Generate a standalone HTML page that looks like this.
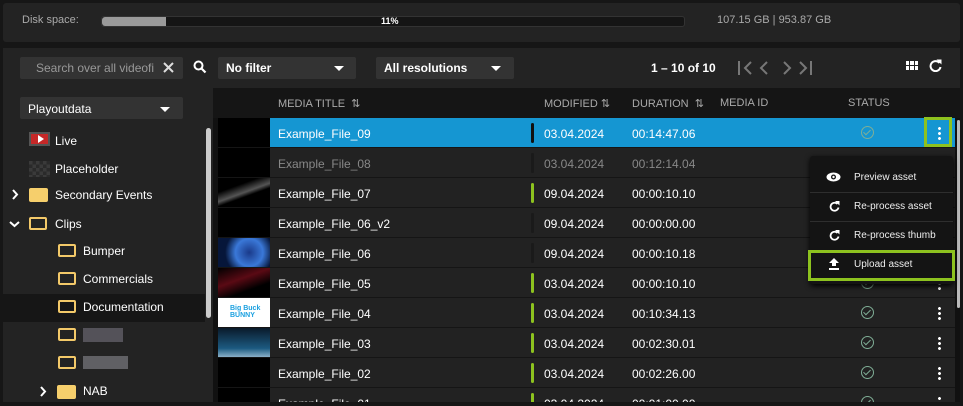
<!DOCTYPE html>
<html style="width:963px;height:406px;overflow:hidden"><head><style>
*{margin:0;padding:0;box-sizing:border-box}
body{width:963px;height:406px;background:#161616;font-family:"Liberation Sans",Arial,sans-serif;color:#fff;position:relative;overflow:hidden;font-size:12px}
.a{position:absolute}
.top{left:3px;top:3px;width:957px;height:39px;background:#232323;border-radius:3px}
.main{left:3px;top:48px;width:957px;height:358px;background:#232323}
.bar{left:101px;top:16px;width:584px;height:11px;background:#151515;border:1px solid #333;border-radius:3px}
.inp{background:#333;border-radius:2px}
.row{left:218px;width:737px;height:30px;border-bottom:1px solid #151515;background:#222}
.row .t{position:absolute;left:60px;top:9px;font-size:12px}
.row .d{position:absolute;left:326px;top:9px}
.row .u{position:absolute;left:414px;top:9px}
.row .th{position:absolute;left:0;top:0;width:52px;height:29px;background:#000}
.row .g{position:absolute;left:313px;top:5px;width:3px;height:20px;border-radius:2px;background:#1a1a1a}
.gr{background:#8dc21f!important}
.ok{position:absolute;left:643px;top:8px;width:13px;height:13px;border:1.5px solid #7fae96;border-radius:50%}
.ok:after{content:"";position:absolute;left:3px;top:1px;width:3px;height:6px;border:solid #7fae96;border-width:0 1.5px 1.5px 0;transform:rotate(45deg)}
.kb{position:absolute;left:720px;top:8px;width:3px;height:15px;background:radial-gradient(circle,#fff 1.3px,transparent 1.6px) 0 0/3px 5px}
.tr{position:absolute;font-size:12px;color:#fff}
.fo{position:absolute;width:18px;height:13px;border:2px solid #f3c969;border-radius:2px}
.ff{position:absolute;width:19px;height:14px;background:#f6cf6c;border-radius:2px}
.mi{position:absolute;left:854px;font-size:10px;color:#eee}
.hd{position:absolute;top:97px;font-size:11px;color:#aaa}
.ch{position:absolute}
</style></head><body>
<div class="a top"></div>
<div class="a" style="left:22px;top:14px;color:#aaa;font-size:11px">Disk space:</div>
<div class="a bar"><div style="width:64px;height:9px;background:#9a9a9a;border-radius:3px 0 0 3px"></div></div>
<div class="a" style="left:381px;top:16px;font-size:9px;font-weight:bold">11%</div>
<div class="a" style="left:717px;top:14px;color:#aaa;font-size:11px">107.15 GB | 953.87 GB</div>

<div class="a main"></div>
<div class="a inp" style="left:20px;top:57px;width:163px;height:22px"></div>
<div class="a" style="left:36px;top:61px;color:#999;font-size:12px">Search over all videofi</div>
<svg class="a" style="left:163px;top:62px" width="11" height="11"><path d="M1 1L10 10M10 1L1 10" stroke="#ddd" stroke-width="2"/></svg>
<svg class="a" style="left:193px;top:60px" width="14" height="14"><circle cx="5.5" cy="5.5" r="4" stroke="#fff" stroke-width="2" fill="none"/><line x1="8.5" y1="8.5" x2="12.5" y2="12.5" stroke="#fff" stroke-width="2.2"/></svg>
<div class="a inp" style="left:218px;top:57px;width:138px;height:22px"></div>
<div class="a" style="left:226px;top:61px;font-weight:bold;font-size:12px">No filter</div>
<div class="a" style="left:334px;top:66px;border:5px solid transparent;border-top:5px solid #fff"></div>
<div class="a inp" style="left:376px;top:57px;width:138px;height:22px"></div>
<div class="a" style="left:384px;top:61px;font-weight:bold;font-size:12px">All resolutions</div>
<div class="a" style="left:491px;top:66px;border:5px solid transparent;border-top:5px solid #fff"></div>
<div class="a" style="left:651px;top:61px;font-weight:bold;font-size:12px">1 – 10 of 10</div>
<svg class="a" style="left:737px;top:59px" width="76" height="18" fill="none" stroke="#777" stroke-width="2"><path d="M2 2V16M14 3L8 9L14 15M30 3L24 9L30 15M47 3L53 9L47 15M63 3L69 9L63 15M74 2V16"/></svg>
<svg class="a" style="left:906px;top:61px" width="12" height="9"><g fill="#fff"><rect x="0" y="0" width="3" height="4"/><rect x="4" y="0" width="4" height="4"/><rect x="9" y="0" width="3" height="4"/><rect x="0" y="5" width="3" height="4"/><rect x="4" y="5" width="4" height="4"/><rect x="9" y="5" width="3" height="4"/></g></svg>
<svg class="a" style="left:929px;top:59px" width="13" height="13"><path d="M10.5 4A5 5 0 1 0 11.5 8" stroke="#fff" stroke-width="2" fill="none"/><path d="M7.5 0.5L12.5 0.5L12.5 5.5Z" fill="#fff"/></svg>

<div class="a inp" style="left:20px;top:97px;width:163px;height:22px"></div>
<div class="a" style="left:28px;top:102px;font-size:12px">Playoutdata</div>
<div class="a" style="left:160px;top:107px;border:5px solid transparent;border-top:5px solid #fff"></div>

<div class="a" style="left:3px;top:294px;width:202px;height:28px;background:#161616"></div>
<div class="a" style="left:206px;top:128px;width:5px;height:190px;background:#ccc;border-radius:3px"></div>
<div class="a" style="left:29px;top:132px;width:21px;height:14px;background:#c62828;border:2px solid #555"></div>
<div class="a" style="left:38px;top:135px;border:4px solid transparent;border-left:6px solid #fff;border-right:0"></div>
<div class="tr" style="left:55px;top:134px">Live</div>
<div class="a" style="left:29px;top:161px;width:21px;height:16px;background:repeating-conic-gradient(#2a2a2a 0 25%,#3a3a3a 0 50%) 0 0/7px 7px"></div>
<div class="tr" style="left:55px;top:162px">Placeholder</div>
<svg class="ch" style="left:11px;top:189px" width="8" height="11"><path d="M2 1L6 5.5L2 10" stroke="#fff" stroke-width="2" fill="none"/></svg>
<div class="ff" style="left:29px;top:188px"></div>
<div class="tr" style="left:55px;top:188px">Secondary Events</div>
<svg class="ch" style="left:9px;top:220px" width="11" height="8"><path d="M1 2L5.5 6L10 2" stroke="#fff" stroke-width="2" fill="none"/></svg>
<div class="fo" style="left:29px;top:217px"></div>
<div class="tr" style="left:55px;top:217px">Clips</div>
<div class="fo" style="left:58px;top:244px"></div><div class="tr" style="left:83px;top:244px">Bumper</div>
<div class="fo" style="left:58px;top:272px"></div><div class="tr" style="left:83px;top:272px">Commercials</div>
<div class="fo" style="left:58px;top:300px"></div><div class="tr" style="left:83px;top:300px">Documentation</div>
<div class="fo" style="left:58px;top:328px"></div><div class="a" style="left:83px;top:328px;width:40px;height:14px;background:#6a6670;opacity:.7"></div>
<div class="fo" style="left:58px;top:356px"></div><div class="a" style="left:83px;top:356px;width:45px;height:13px;background:#7a7a80;opacity:.7"></div>
<svg class="ch" style="left:39px;top:386px" width="8" height="11"><path d="M2 1L6 5.5L2 10" stroke="#fff" stroke-width="2" fill="none"/></svg>
<div class="ff" style="left:57px;top:385px"></div><div class="tr" style="left:83px;top:384px">NAB</div>

<div class="a" style="left:213px;top:88px;width:747px;height:318px;background:#111"></div>
<div class="a" style="left:213px;top:88px;width:747px;height:30px;background:#151515"></div>
<div class="hd" style="left:278px">MEDIA TITLE &nbsp;⇅</div>
<div class="hd" style="left:544px">MODIFIED ⇅</div>
<div class="hd" style="left:632px">DURATION &nbsp;⇅</div>
<div class="hd" style="left:720px">MEDIA ID</div>
<div class="hd" style="left:848px">STATUS</div>

<div class="a row" style="top:118px;background:#1596d2"><div class="th"></div><div class="t">Example_File_09</div><div class="g" style="background:#111"></div><div class="d">03.04.2024</div><div class="u">00:14:47.06</div><div class="ok"></div><div class="kb"></div></div>
<div class="a row" style="top:148px;color:#888"><div class="th"></div><div class="t">Example_File_08</div><div class="g"></div><div class="d">03.04.2024</div><div class="u">00:12:14.04</div></div>
<div class="a row" style="top:178px"><div class="th" style="background:linear-gradient(160deg,#000 30%,#555 50%,#000 60%)"></div><div class="t">Example_File_07</div><div class="g gr"></div><div class="d">09.04.2024</div><div class="u">00:00:10.10</div></div>
<div class="a row" style="top:208px"><div class="th"></div><div class="t">Example_File_06_v2</div><div class="g"></div><div class="d">09.04.2024</div><div class="u">00:00:00.00</div></div>
<div class="a row" style="top:238px"><div class="th" style="background:radial-gradient(circle at 60% 50%,#1a3a8a,#3a78d8 40%,#06163a 70%)"></div><div class="t">Example_File_06</div><div class="g"></div><div class="d">09.04.2024</div><div class="u">00:00:10.18</div></div>
<div class="a row" style="top:268px"><div class="th" style="background:linear-gradient(160deg,#000,#5a0a14 40%,#000 70%)"></div><div class="t">Example_File_05</div><div class="g gr"></div><div class="d">03.04.2024</div><div class="u">00:00:10.10</div><div class="ok"></div><div class="kb"></div></div>
<div class="a row" style="top:298px"><div class="th" style="background:#fff"><div style="position:absolute;left:12px;top:7px;font-size:7px;color:#1aa0e0;font-weight:bold;line-height:7px">Big Buck<br>BUNNY</div></div><div class="t">Example_File_04</div><div class="g gr"></div><div class="d">03.04.2024</div><div class="u">00:10:34.13</div><div class="ok"></div><div class="kb"></div></div>
<div class="a row" style="top:328px"><div class="th" style="background:linear-gradient(180deg,#0a1a2a,#1c5a80 70%,#8ab0c8)"></div><div class="t">Example_File_03</div><div class="g gr"></div><div class="d">03.04.2024</div><div class="u">00:02:30.01</div><div class="ok"></div><div class="kb"></div></div>
<div class="a row" style="top:358px"><div class="th"></div><div class="t">Example_File_02</div><div class="g gr"></div><div class="d">03.04.2024</div><div class="u">00:02:26.00</div><div class="ok"></div><div class="kb"></div></div>
<div class="a row" style="top:388px;height:18px;overflow:hidden"><div class="th"></div><div class="t">Example_File_01</div><div class="g gr"></div><div class="d">03.04.2024</div><div class="u">00:01:00.00</div><div class="ok"></div><div class="kb"></div></div>
<div class="a" style="left:0;top:402px;width:963px;height:4px;background:#161616"></div>
<div class="a" style="left:957px;top:120px;width:3px;height:188px;background:#bbb;border-radius:2px"></div>

<div class="a" style="left:924px;top:117px;width:28px;height:30px;border:3px solid #8dc21f"></div>

<div class="a" style="left:810px;top:156px;width:143px;height:128px;background:#141414;border-radius:3px;box-shadow:0 2px 6px #000"></div>
<div class="a" style="left:810px;top:192px;width:143px;height:1px;background:#2e2e2e"></div>
<div class="a" style="left:810px;top:221px;width:143px;height:1px;background:#2e2e2e"></div>
<svg class="a" style="left:826px;top:172px" width="15" height="10"><ellipse cx="7.5" cy="5" rx="7" ry="4.5" fill="#fff"/><circle cx="7.5" cy="5" r="2.5" fill="#141414"/><circle cx="7.5" cy="5" r="1.2" fill="#fff"/></svg>
<div class="mi" style="top:172px">Preview asset</div>
<svg class="a" style="left:829px;top:201px" width="11" height="11"><path d="M8.5 3A4 4 0 1 0 9.5 6.5" stroke="#fff" stroke-width="1.8" fill="none"/><path d="M6 0L10.5 0L10.5 4.5Z" fill="#fff"/></svg>
<div class="mi" style="top:201px">Re-process asset</div>
<svg class="a" style="left:829px;top:230px" width="11" height="11"><path d="M8.5 3A4 4 0 1 0 9.5 6.5" stroke="#fff" stroke-width="1.8" fill="none"/><path d="M6 0L10.5 0L10.5 4.5Z" fill="#fff"/></svg>
<div class="mi" style="top:230px">Re-process thumb</div>
<div class="a" style="left:808px;top:250px;width:147px;height:31px;border:3px solid #8dc21f;background:#141414"></div>
<svg class="a" style="left:829px;top:258px" width="10" height="12"><path d="M5 0L10 5H7V8H3V5H0Z" fill="#fff"/><rect x="0" y="10" width="10" height="2" fill="#fff"/></svg>
<div class="mi" style="top:259px">Upload asset</div>
</body></html>
